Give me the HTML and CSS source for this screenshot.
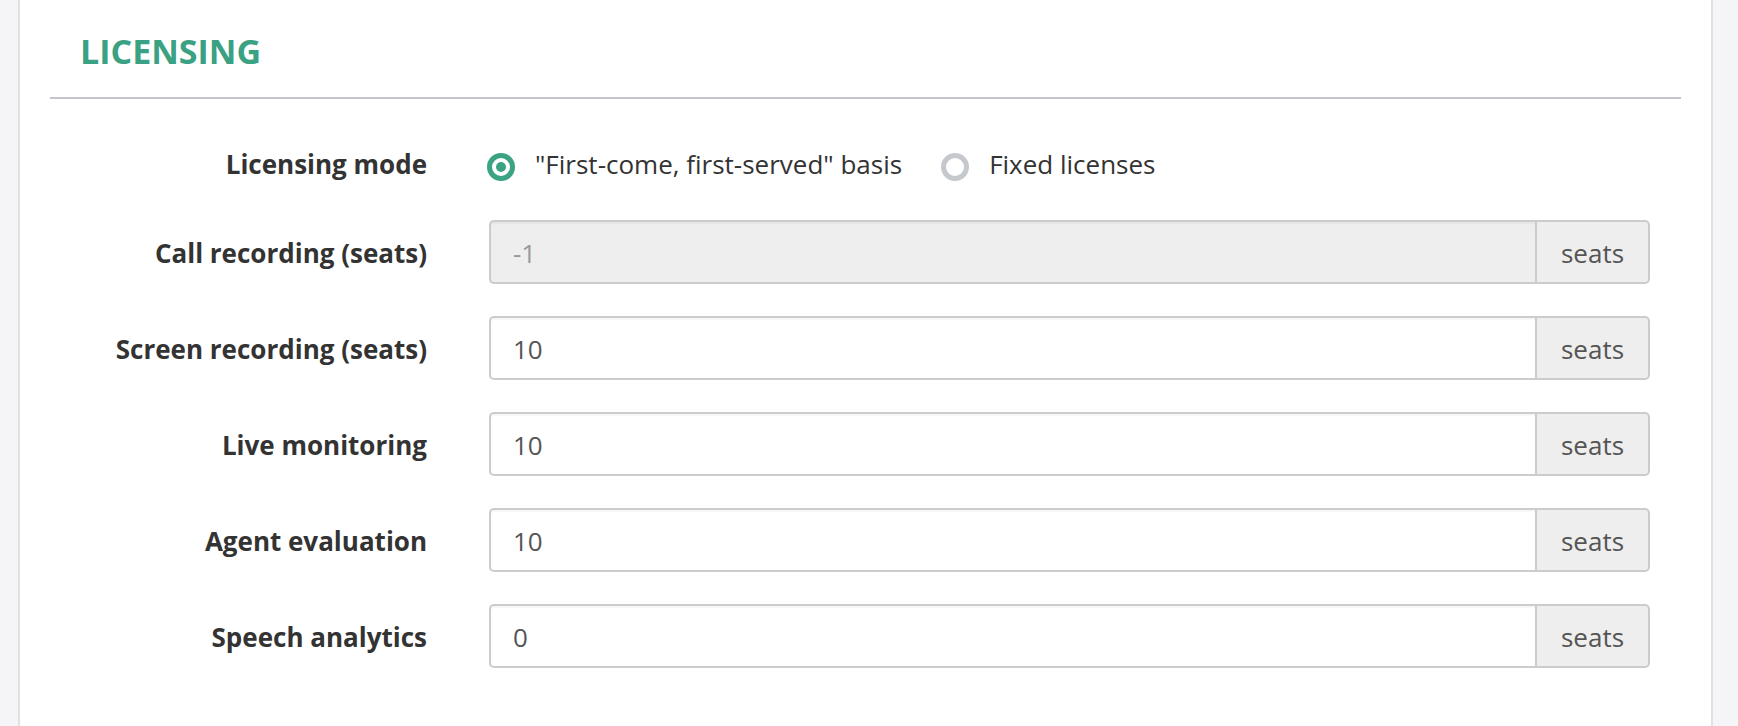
FILE: index.html
```html
<!DOCTYPE html>
<html lang="en">
<head>
<meta charset="utf-8">
<title>Licensing</title>
<link rel="stylesheet" href="styles.css">
</head>
<body>
<div class="panel">
  <div class="panel-header">
    <h2 class="panel-title">LICENSING</h2>
  </div>
  <form class="form">
    <div class="row row-radio">
      <div class="label">Licensing mode</div>
      <div class="radios">
        <label class="radio"><span class="radio-dot checked"></span><span>"First-come, first-served" basis</span></label>
        <label class="radio"><span class="radio-dot"></span><span>Fixed licenses</span></label>
      </div>
    </div>
    <div class="row">
      <div class="label">Call recording (seats)</div>
      <div class="input-group">
        <div class="input disabled">-1</div>
        <div class="addon">seats</div>
      </div>
    </div>
    <div class="row">
      <div class="label">Screen recording (seats)</div>
      <div class="input-group">
        <div class="input">10</div>
        <div class="addon">seats</div>
      </div>
    </div>
    <div class="row">
      <div class="label">Live monitoring</div>
      <div class="input-group">
        <div class="input">10</div>
        <div class="addon">seats</div>
      </div>
    </div>
    <div class="row">
      <div class="label">Agent evaluation</div>
      <div class="input-group">
        <div class="input">10</div>
        <div class="addon">seats</div>
      </div>
    </div>
    <div class="row">
      <div class="label">Speech analytics</div>
      <div class="input-group">
        <div class="input">0</div>
        <div class="addon">seats</div>
      </div>
    </div>
  </form>
</div>
</body>
</html>
```

FILE: styles.css
```css
* { box-sizing: border-box; }
html, body { height: 100%; }
body {
  margin: 0;
  background: #f5f5f7;
  font-family: "Open Sans", "Liberation Sans", sans-serif;
  color: #333;
  overflow: hidden;
}
.panel {
  margin: 0 25px 0 18px;
  min-height: 100%;
  background: #fff;
  border-left: 2px solid #e1e1e3;
  border-right: 2px solid #e1e1e3;
  padding: 0 30px;
}
.panel-header {
  padding: 30px 30px 25px;
  border-bottom: 2px solid #c3c6ca;
}
.panel-title {
  margin: 0;
  font-size: 34px;
  line-height: 42px;
  font-weight: 700;
  color: #3ba183;
}
.form {
  padding-top: 40px;
  padding-right: 31px;
  display: flex;
  flex-direction: column;
  gap: 32px;
}
.row {
  display: grid;
  grid-template-columns: 377px 1fr;
  column-gap: 62px;
  align-items: center;
  height: 64px;
}
.row-radio { height: 49px; }
.label {
  text-align: right;
  font-weight: 700;
  font-size: 26px;
  color: #333;
  white-space: nowrap;
  padding-top: 2px;
}
.row-radio .label { padding-top: 0; }
.radios {
  display: flex;
  align-items: center;
  gap: 39px;
  margin-left: -2px;
}
.radio {
  display: flex;
  align-items: center;
  gap: 20px;
  font-size: 26px;
  color: #333;
}
.radio-dot {
  width: 28px;
  height: 28px;
  border-radius: 50%;
  border: 5px solid #c5c9cd;
  background: #fff;
  display: inline-block;
  position: relative;
  top: 3px;
}
.radio-dot.checked {
  border-color: #3ba383;
}
.radio-dot.checked::after {
  content: "";
  position: absolute;
  left: 4px;
  top: 4px;
  width: 10px;
  height: 10px;
  border-radius: 50%;
  background: #3ba383;
}
.input-group {
  display: flex;
  height: 64px;
}
.input {
  flex: 1;
  border: 2px solid #cccccc;
  border-right: none;
  border-radius: 5px 0 0 5px;
  background: #fff;
  color: #555;
  font-size: 26px;
  padding: 1px 22px 0;
  display: flex;
  align-items: center;
  box-shadow: inset 0 2px 2px rgba(0,0,0,0.04);
}
.input.disabled {
  background: #eeeeee;
  color: #999;
}
.addon {
  width: 115px;
  border: 2px solid #cccccc;
  border-radius: 0 5px 5px 0;
  background: #eeeeee;
  color: #555;
  font-size: 26px;
  padding-top: 1px;
  display: flex;
  align-items: center;
  justify-content: center;
}
```
